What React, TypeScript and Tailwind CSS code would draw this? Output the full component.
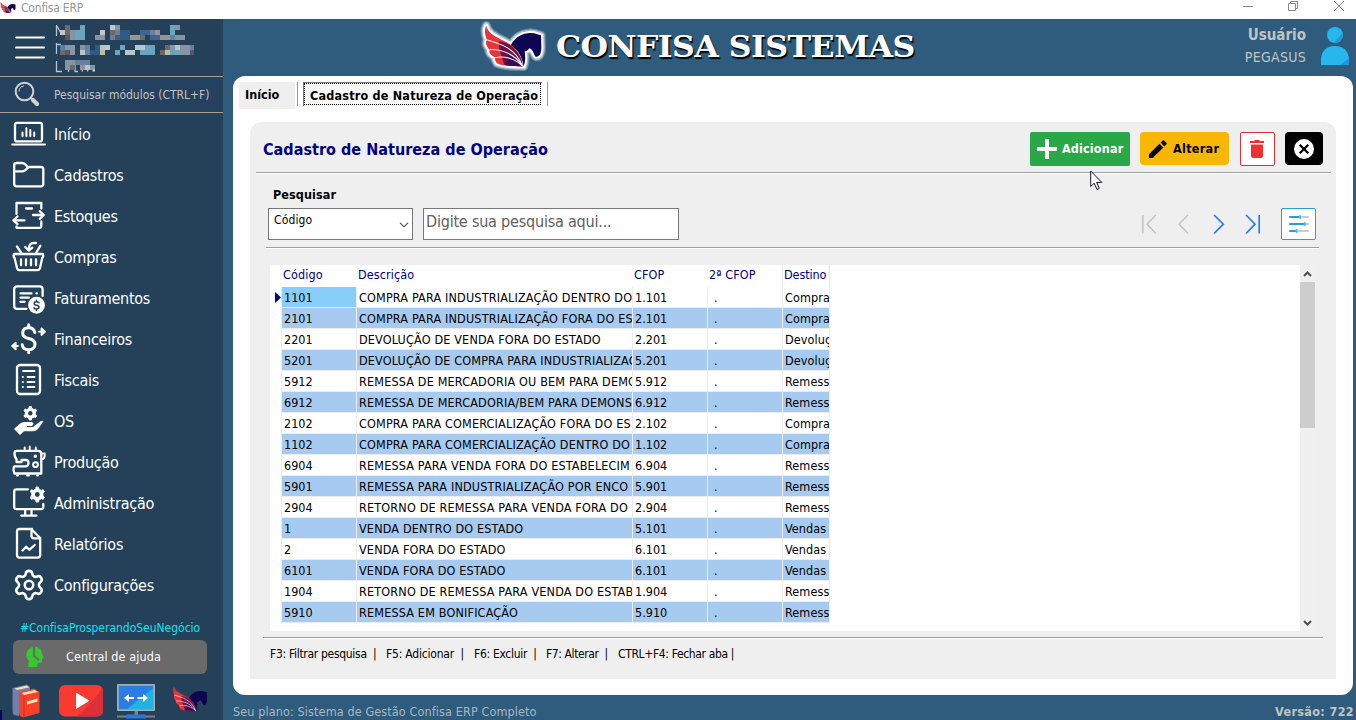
import type { ReactNode } from "react";
import { Settings } from "lucide-react";

const navy = "#0d0552";
const side = "#244159";

function gearPath(cx: number, cy: number, r: number, teeth: number) {
  const pts: string[] = [];
  for (let i = 0; i < teeth; i++) {
    const a = (i / teeth) * Math.PI * 2 - Math.PI / 2;
    const s = Math.PI / teeth;
    for (const [o, k] of [[-0.95, 0.74], [-0.45, 0.78], [-0.32, 1], [0.32, 1], [0.45, 0.78]]) {
      pts.push(`${(cx + Math.cos(a + o * s) * r * k).toFixed(2)},${(cy + Math.sin(a + o * s) * r * k).toFixed(2)}`);
    }
  }
  return `M${pts.join("L")}Z`;
}

function Horse({ className, glow, box }: { className: string; glow?: boolean; box: string }) {
  const horse =
    "M122 108C132 90 148 72 174 70C192 66 205 74 214 76L215 112C215 134 208 141 199 140C191 136 192 118 179 115C173 124 167 125 165 122C167 140 168 155 162 169C158 145 148 118 122 108Z";
  const wing =
    "M50 47C58 84 112 88 132 112C150 132 160 152 158 169C132 168 104 170 82 160C78 152 72 148 78 143C64 136 56 128 60 120C50 108 46 98 52 90C46 76 43 60 50 47Z";
  return (
    <svg className={className} viewBox={box}>
      {glow && (
        <g stroke="#fff" strokeLinejoin="round" fill="#fff">
          <path d={horse + wing} strokeWidth="28" opacity=".25" />
          <path d={horse + wing} strokeWidth="21" opacity=".45" />
          <path d={horse + wing} strokeWidth="13" opacity=".9" />
        </g>
      )}
      <path d={horse} fill={navy} />
      <path d={wing} fill="#e73538" />
      <path d="M88 94C112 98 124 106 134 116C150 132 160 152 158 169C136 168 118 168 104 164L96 140L88 114Z" fill="#6d1149" />
      <path d="M118 132C140 138 156 150 158 169C140 168 124 168 108 165Z" fill="#3a0a50" />
      <g fill="none" stroke="#f7eef2" strokeWidth="3.2">
        <path d="M51 89C90 100 140 115 158 168" />
        <path d="M59 119C95 116 140 135 158 168" />
        <path d="M77 143C105 136 140 148 158 168" />
      </g>
    </svg>
  );
}

function MenuIcon({ children }: { children: ReactNode }) {
  return (
    <svg
      className="h-[41px] w-9 shrink-0"
      viewBox="11 0 36 41"
      fill="none"
      stroke="#fff"
      strokeWidth="2.3"
      strokeLinecap="round"
      strokeLinejoin="round"
    >
      {children}
    </svg>
  );
}

const menu: { label: string; icon: ReactNode }[] = [
  {
    label: "Início",
    icon: (
      <MenuIcon>
        <rect x="15" y="9.8" width="27" height="18.6" rx="2" />
        <path d="M12.2 31.6H45M22.5 19.5V23.3M26.4 15V23.3M30.3 17V23.3M34.2 19.5V23.3" strokeWidth="2" />
      </MenuIcon>
    ),
  },
  {
    label: "Cadastros",
    icon: (
      <MenuIcon>
        <path d="M28 13H41Q43.3 13 43.3 15V30Q43.3 32.3 41 32.3H16.5Q14.2 32.3 14.2 30V11Q14.2 9 16.5 9H22Q24 9 25.2 10.3L28 13.6L25 16.4Q24 17.4 22 17.4H14.5" />
      </MenuIcon>
    ),
  },
  {
    label: "Estoques",
    icon: (
      <MenuIcon>
        <path d="M16.5 19V8H41.3V13.5M16.5 31.5V32.8H40Q41.3 32.8 41.3 31.5V26.5M26 13.5H32" />
        <path d="M33 20H43.5M39.7 16.2L43.8 20L39.7 23.8M24.5 25.3H14M17.5 21.5L13.4 25.3L17.5 29.1" />
      </MenuIcon>
    ),
  },
  {
    label: "Compras",
    icon: (
      <MenuIcon>
        <path d="M14 18H42.8Q43.8 20.5 42.2 22L40 32Q39.4 34.2 37.5 34.2H19.5Q17.5 34.2 17 32L14.6 22Q13 20.5 14 18Z" />
        <path d="M21 23.5V29.3M26 23.5V29.3M31 23.5V29.3M36 23.5V29.3M17 10.5L21.3 17M40.3 9.8L36 17M36 7H33.5Q29 7 28.7 13.5M25.3 11L28.7 14.5L32.3 11.6" />
      </MenuIcon>
    ),
  },
  {
    label: "Faturamentos",
    icon: (
      <MenuIcon>
        <path d="M26.5 31.8H17Q14.2 31.8 14.2 29V12Q14.2 9.3 17 9.3H39.8Q42.6 9.3 42.6 12V19M20.5 16.4H31.5M36.5 16.4H37M20.5 20.7H29M20.5 24.8H24.5" />
        <circle cx="36.5" cy="28.3" r="7.3" fill="#fff" />
        <path
          d="M39 25.8Q38 24.7 36.5 24.7Q34.2 24.7 34.2 26.4Q34.2 28 36.5 28.3Q39 28.7 39 30.3Q39 32 36.5 32Q34.8 32 33.9 30.8M36.5 23.3V24.5M36.5 32V33.4"
          stroke={side}
          strokeWidth="1.5"
        />
      </MenuIcon>
    ),
  },
  {
    label: "Financeiros",
    icon: (
      <MenuIcon>
        <path
          d="M34.8 14.5Q33.8 9.8 28.7 9.8Q22.7 9.8 22.7 15Q22.7 19.3 28.7 20.5Q35 21.8 35 26.3Q35 31.7 28.7 31.7Q23 31.7 22.2 26.7M28.7 6.8V9.5M28.7 32V34.8"
          strokeWidth="3"
        />
        <path d="M39 13.7H44M41.5 10.3L45 13.7L41.5 17.1ZM18 28H13.5M15.7 24.6L12.2 28L15.7 31.4Z" fill="#fff" strokeWidth="1.8" />
      </MenuIcon>
    ),
  },
  {
    label: "Fiscais",
    icon: (
      <MenuIcon>
        <rect x="17" y="6" width="23" height="29" rx="3" />
        <path d="M23 12H34.5M27.5 18H34.5M27.5 23H34.5M27.5 28H34.5M22.7 18H23M22.7 23H23M22.7 28H23" strokeWidth="1.8" />
      </MenuIcon>
    ),
  },
  {
    label: "OS",
    icon: (
      <MenuIcon>
        <path d={gearPath(30.3, 13.3, 6.8, 6)} fill="#fff" strokeWidth="1" />
        <circle cx="30.3" cy="13.3" r="2.2" fill={side} stroke="none" />
        <path
          d="M14 29L20 23.5Q22.5 21.5 26 22H31.5Q33.8 22.3 33.5 24L32 26H27V27H33L40 21.5Q42 20.3 43.5 21.3L38 29Q36.3 31.3 33 31.3H24L20 35Z"
          fill="#fff"
          stroke="none"
        />
      </MenuIcon>
    ),
  },
  {
    label: "Produção",
    icon: (
      <MenuIcon>
        <path d="M14.5 12Q14.5 9.8 17 9.8H38Q41.3 9.8 41.3 13V32.5H14.5Q12.5 28 14.5 25.3H26Q28.5 25 28.5 22Q28.5 19 26 19H21.5V21H16.5V18Q14.5 16.5 14.5 12Z" />
        <path
          d="M41.5 18H43Q45 17 44.7 12.5H42M24.7 9V6.5M29.7 9V5.5M35.8 9V6.5M17 34.5H18M27 34.5H29M37 34.5H38"
          strokeWidth="2"
        />
        <circle cx="35.5" cy="23.7" r="2.4" strokeWidth="2" />
        <circle cx="35.3" cy="15.3" r="1" fill="#fff" strokeWidth="1.5" />
      </MenuIcon>
    ),
  },
  {
    label: "Administração",
    icon: (
      <MenuIcon>
        <path d="M28 7.3H16.5Q14.2 7.3 14.2 9.5V25Q14.2 27.2 16.5 27.2H41Q43.3 27.2 43.3 25V22M25.2 27.5V33M31.5 27.5V33M21 33.6H36.5" />
        <path d={gearPath(37.3, 12.5, 7.6, 6)} fill="#fff" strokeWidth="1" />
        <circle cx="37.3" cy="12.5" r="2.4" fill={side} stroke="none" />
      </MenuIcon>
    ),
  },
  {
    label: "Relatórios",
    icon: (
      <MenuIcon>
        <path d="M32 6H19.5Q17 6 17 8.5V32Q17 34.6 19.5 34.6H37.5Q40.2 34.6 40.2 32V15L31.5 6.3V13Q31.5 15.3 34 15.3H40M22.5 27.5L26.2 23.7L29.3 26.8L34.7 22" />
      </MenuIcon>
    ),
  },
  {
    label: "Configurações",
    icon: (
      <span className="flex h-[41px] w-9 shrink-0 items-center justify-center">
        <Settings className="size-[34px] text-white" strokeWidth={1.8} />
      </span>
    ),
  },
];

const rows: [string, string, string, string][] = [
  ["1101", "COMPRA PARA INDUSTRIALIZAÇÃO DENTRO DO", "1.101", "Compra"],
  ["2101", "COMPRA PARA INDUSTRIALIZAÇÃO FORA DO ES", "2.101", "Compra"],
  ["2201", "DEVOLUÇÃO DE VENDA FORA DO ESTADO", "2.201", "Devoluç"],
  ["5201", "DEVOLUÇÃO DE COMPRA PARA INDUSTRIALIZAÇ", "5.201", "Devoluç"],
  ["5912", "REMESSA DE MERCADORIA OU BEM PARA DEMO", "5.912", "Remess"],
  ["6912", "REMESSA DE MERCADORIA/BEM PARA DEMONS", "6.912", "Remess"],
  ["2102", "COMPRA PARA COMERCIALIZAÇÃO FORA DO ES", "2.102", "Compra"],
  ["1102", "COMPRA PARA COMERCIALIZAÇÃO DENTRO DO", "1.102", "Compra"],
  ["6904", "REMESSA PARA VENDA FORA DO ESTABELECIM", "6.904", "Remess"],
  ["5901", "REMESSA PARA INDUSTRIALIZAÇÃO POR ENCO", "5.901", "Remess"],
  ["2904", "RETORNO DE REMESSA PARA VENDA FORA DO", "2.904", "Remess"],
  ["1", "VENDA DENTRO DO ESTADO", "5.101", "Vendas"],
  ["2", "VENDA FORA DO ESTADO", "6.101", "Vendas"],
  ["6101", "VENDA FORA DO ESTADO", "6.101", "Vendas"],
  ["1904", "RETORNO DE REMESSA PARA VENDA DO ESTAB", "1.904", "Remess"],
  ["5910", "REMESSA EM BONIFICAÇÃO", "5.910", "Remess"],
];

const tones: Record<string, string> = {
  a: "#8794a6", b: "#6ba4bd", c: "#5e5663", d: "#2e5a86", e: "#6c6a69", f: "#c3c6c9",
  g: "#b7c6c8", h: "#697fa0", i: "#9a938e", j: "#3f6498", k: "#b8bfa0", l: "#4f80b8",
};
const mosaicRows: [number, string][] = [
  [25, "  e  b     fa          ba"],
  [30, " feabb   f ehdd  jjhi  b "],
  [35, "  cabb  aa hcddiie jjiihaa"],
  [45, " laa ah dgf  b  ggbb  eagaah"],
  [50, " eca ghddk  b gg bbb ekbbaac"],
  [60, "  aahhh"],
  [65, "  ae iga"],
];

function Mosaic() {
  return (
    <svg className="h-[57px] w-[140px]" viewBox="54 19 140 57">
      <g fill="none" stroke="#b5c3d3" strokeWidth="1.3">
        <path d="M56.5 25V36M57 26L62 35M56.5 43V54M56.5 44.5H61M56.5 61V71.5H62M66 62H72M68.5 62V72M75 62V71.5H78M82 71.5L85 64L88 71.5" />
      </g>
      {mosaicRows.map(([y, line]) =>
        [...line].map((c, i) =>
          tones[c] ? <rect key={`${y}-${i}`} x={55 + i * 5} y={y} width="5" height="5" fill={tones[c]} /> : null,
        ),
      )}
      <path d="M92.5 70.5H95" stroke="#d0d4d8" strokeWidth="2" />
    </svg>
  );
}

function Sidebar() {
  return (
    <aside className="relative flex h-[701px] w-[223px] shrink-0 flex-col bg-[#244159]">
      <div className="flex h-[57px] items-start">
        <svg className="ml-[14px] h-[57px] w-8" viewBox="14 19 32 57" stroke="#fff" strokeWidth="2.2" strokeLinecap="round">
          <path d="M16 37.5H44M16 47.5H44M16 57.5H44" />
        </svg>
        <div className="ml-2">
          <Mosaic />
        </div>
      </div>
      <div className="flex h-[37px] items-center border-y border-[#a5a09c] bg-[#24415f]">
        <svg className="ml-[14px] h-7 w-7" viewBox="0 0 28 28" fill="none" stroke="#d0d1d3">
          <circle cx="10.5" cy="10.5" r="8.8" strokeWidth="2" />
          <path d="M5 10.5Q5.2 5.4 10 5" strokeWidth="1" />
          <path d="M17 17L19 19" strokeWidth="2" />
          <path d="M19 19L23 23" strokeWidth="4.2" strokeLinecap="round" />
        </svg>
        <span className="ml-3 text-[12px] tracking-[-0.02px] whitespace-nowrap text-[#c3c3c3]">Pesquisar módulos (CTRL+F)</span>
      </div>
      <nav className="flex flex-col">
        {menu.map((m) => (
          <div key={m.label} className="flex h-[41px] items-center pl-[11px]">
            {m.icon}
            <span className="ml-[7px] pt-[2px] text-[16px] tracking-[-0.25px] whitespace-nowrap text-white">{m.label}</span>
          </div>
        ))}
      </nav>
      <div className="mt-[14px] flex h-[17px] items-center pl-5 text-[12px] leading-none tracking-[-0.02px] whitespace-nowrap text-[#0de4ee]">
        #ConfisaProsperandoSeuNegócio
      </div>
      <div className="mt-1 ml-[13px] flex h-[34px] w-[194px] items-center rounded-[6px] bg-[#6a6a6a]">
        <svg className="ml-3 h-[22px] w-5" viewBox="0 0 20 22">
          <path d="M3 21L4 15Q-1 10 3 4Q7 0 12 1Q17 3 17 8L19 11L17 13V16Q16 17 13 17L12 21Z" fill="#35c92f" />
          <path d="M9 0V10L14 14" fill="none" stroke="#6a6a6a" strokeWidth="2.2" />
        </svg>
        <span className="ml-[21px] pt-px text-[12.5px] tracking-[0.1px] whitespace-nowrap text-white">Central de ajuda</span>
      </div>
      <div className="mt-[9px] flex items-start pl-[11px]">
        <svg className="h-[37px] w-[31px]" viewBox="11 683 31 37">
          <path d="M12.5 688L27 684.5L30 687V692L19 694V716L14 715Q12.3 713 12.5 710Z" fill="#7080ac" />
          <path d="M14.5 688.5L27 685.5L29 687.5L17 690Z" fill="#f6dfa8" />
          <path d="M19 692.5L34 688.5L39.5 692V713L23 717.5Q19 716 19 713Z" fill="#f5402c" />
          <path d="M21.5 693L34.5 690L38 692L24 695Z" fill="#fde3ac" />
          <path d="M24 696V717" stroke="#c92f25" />
          <path d="M27 701.5L37.5 698.5V701.5L27 704.5Z" fill="#fdeab8" />
        </svg>
        <svg className="mt-px ml-[17px] h-[33px] w-11" viewBox="0 0 44 33">
          <rect y="1" width="44" height="31.5" rx="6" fill="#f93a30" />
          <path d="M44 7V26Q44 32.5 38 32.5H18L36 14L44 4Z" fill="#dc3038" />
          <path d="M17 8.5V25L30.5 16.7Z" fill="#fff" />
        </svg>
        <svg className="ml-[14px] h-9 w-[38px]" viewBox="0 0 38 36">
          <path d="M17.5 28H21V33H17.5ZM0 32.5H38V34.5H0Z" fill="#7a8088" />
          <rect x="9" y="31.5" width="20" height="4" rx="1" fill="#2a78df" />
          <rect y="1" width="38" height="27" rx="1" fill="#a3adb4" />
          <path d="M1.8 2.8H36.2V26.2H1.8Z" fill="#2b7de6" />
          <path d="M36.2 5V26.2H10Z" fill="#1fb2e2" />
          <path d="M7 15L12 11V14H17V16H12V19ZM31 15L26 11V14H20.5V16H26V19Z" fill="#fff" />
        </svg>
        <Horse className="mt-[3px] ml-[17px] h-[26px] w-9" box="40 44 180 130" />
      </div>
      <span className="absolute bottom-0 left-0 h-[10px] w-[2px] bg-[#0b0560]" />
    </aside>
  );
}

function Rule({ className }: { className: string }) {
  return <div className={`h-[2px] shrink-0 border-t border-[#9f9f9f] bg-white ${className}`} />;
}

function Grid() {
  return (
    <div className="ml-5 flex h-[366px] w-[1045px] bg-white">
      <div className="flex w-[1030px] flex-col">
        <div className="flex h-[22px] pl-[13px] text-[12.5px] leading-[20px] tracking-[0.1px] text-[#000080]">
          <span className="w-[75px]">Código</span>
          <span className="w-[276px]">Descrição</span>
          <span className="w-[75px]">CFOP</span>
          <span className="w-[73px]">2ª CFOP</span>
          <span className="w-[48px] border-x border-[#e6e6e6] pl-px tracking-[-0.1px]">Destino</span>
        </div>
        {rows.map(([code, desc, cfop, dest], i) => (
          <div key={i} className="flex h-[21px] text-[12.5px] leading-[22px] whitespace-nowrap text-black">
            <span className="flex w-[11px] items-center justify-center">
              {i === 0 && (
                <svg className="ml-[5px] h-[11px] w-[6px]" viewBox="0 0 6 11">
                  <path d="M0 0L6 5.5L0 11Z" fill="#000080" />
                </svg>
              )}
            </span>
            <div className={`flex border-l border-[#ececec] ${i % 2 ? "bg-[#a6caf0]" : "bg-white"}`}>
              <span className={`w-[75px] overflow-hidden border-r border-b border-[#ececec] pl-[2px] ${i === 0 ? "bg-[#87cefa]" : ""}`}>{code}</span>
              <span className="w-[276px] overflow-hidden border-r border-b border-[#ececec] pl-[2px] tracking-[0.17px]">{desc}</span>
              <span className="w-[75px] overflow-hidden border-r border-b border-[#ececec] pl-[2px]">{cfop}</span>
              <span className="w-[75px] overflow-hidden border-r border-b border-[#ececec] pl-[6px]">.</span>
              <span className="w-[47px] overflow-hidden border-r border-b border-[#ececec] pl-[2px] tracking-[0.1px]">{dest}</span>
            </div>
          </div>
        ))}
      </div>
      <div className="flex w-[15px] flex-col items-center bg-[#f0f0f0]">
        <svg className="h-[17px] w-[15px]" viewBox="0 0 15 17" fill="none" stroke="#514b58" strokeWidth="2">
          <path d="M4 11L7.5 7.5L11 11" />
        </svg>
        <div className="h-[146px] w-full bg-[#cdcdcd]" />
        <svg className="mt-auto h-[17px] w-[15px]" viewBox="0 0 15 17" fill="none" stroke="#514b58" strokeWidth="2">
          <path d="M4 7L7.5 10.5L11 7" />
        </svg>
      </div>
    </div>
  );
}

function Workspace() {
  return (
    <main className="ml-[10px] flex h-[619px] w-[1120px] flex-col rounded-[12px] bg-white">
      <div className="flex h-[46px] items-start pt-[6px] pl-[6px] font-bold text-black">
        <div className="h-[27px] w-14 bg-[#efefef] pl-[6px] text-[12.5px] leading-[26px]">Início</div>
        <div className="ml-[2px] h-6 w-px bg-[#999]" />
        <div className="ml-[5px] h-[24px] w-[239px] border-t border-l border-[#777] bg-[#f8f8f8]">
          <div className="h-[22px] w-[237px] border border-dotted border-black pl-[5px] text-[12.5px] leading-[23px] tracking-[0.2px] whitespace-nowrap">
            Cadastro de Natureza de Operação
          </div>
        </div>
        <div className="ml-[5px] h-6 w-px bg-[#999]" />
      </div>
      <section className="relative ml-[17px] flex h-[557px] w-[1086px] flex-col rounded-t-[12px] bg-[#efefef]">
        <div className="flex h-[50px] items-start pt-[10px] pl-[13px]">
          <h1 className="w-[767px] pt-px text-[16px] leading-[34px] font-bold tracking-[0.03px] whitespace-nowrap text-[#000080]">
            Cadastro de Natureza de Operação
          </h1>
          <button className="flex h-[34px] w-[100px] items-center rounded-[2px] bg-[#2aa746] pl-[7px] text-[12.5px] font-bold text-white">
            <svg className="h-5 w-5" viewBox="0 0 20 20" stroke="#fff" strokeWidth="4">
              <path d="M10 0V20M0 10H20" />
            </svg>
            <span className="ml-[5px] pt-px tracking-[0.15px]">Adicionar</span>
          </button>
          <button className="ml-[10px] flex h-[33px] w-[89px] items-center rounded-[4px] bg-[#f8b605] pl-[9px] text-[12.5px] font-bold text-black">
            <svg className="h-[18px] w-[18px]" viewBox="0 0 18 18">
              <path d="M0 14.2L10.5 3.7L14.3 7.5L3.8 18H0ZM11.6 2.6L13.8 .5Q14.4 0 15 .5L17.5 3Q18 3.6 17.5 4.2L15.4 6.4Z" />
            </svg>
            <span className="ml-[6px] pt-[2px] tracking-[0.3px]">Alterar</span>
          </button>
          <button className="ml-[11px] flex h-[34px] w-[35px] items-center rounded-[2px] border border-[#e03038] bg-white pl-[9px]">
            <svg className="h-[18px] w-[14px]" viewBox="0 0 14 18" fill="#ee3030">
              <path d="M1 4.5H13V16Q13 18 11 18H3Q1 18 1 16ZM0 1H4L5 0H9L10 1H14V3H0Z" />
            </svg>
          </button>
          <button className="ml-[10px] flex h-[33px] w-[38px] items-center justify-center rounded-[4px] bg-black">
            <svg className="h-5 w-5" viewBox="0 0 20 20">
              <circle cx="10" cy="10" r="10" fill="#fff" />
              <path d="M5.7 5.7L14.3 14.3M14.3 5.7L5.7 14.3" stroke="#000" strokeWidth="2.3" />
            </svg>
          </button>
        </div>
        <Rule className="ml-[6px] w-[1075px]" />
        <div className="mt-[13px] h-[16px] pl-[23px] text-[12.5px] leading-[16px] font-bold tracking-[0.1px] text-black">Pesquisar</div>
        <div className="mt-[5px] flex h-8 items-start pl-[18px]">
          <div className="flex h-8 w-[145px] items-start border border-[#777] bg-white pl-[5px]">
            <span className="text-[12px] leading-[22px] tracking-[0.15px]">Código</span>
            <svg className="mt-[10px] mr-[3px] ml-auto h-3 w-[10px]" viewBox="0 0 10 12" fill="none" stroke="#444" strokeWidth="1.1">
              <path d="M1 3.8L5 7.8L9 3.8" />
            </svg>
          </div>
          <div className="ml-[10px] h-8 w-64 border border-[#777] bg-white pl-[2px] text-[16px] leading-[26px] tracking-[-0.2px] whitespace-nowrap text-[#606060]">
            Digite sua pesquisa aqui...
          </div>
          <svg className="ml-[461px] h-8 w-[124px]" viewBox="1140 208 124 32" fill="none" strokeWidth="1.7">
            <path d="M1142.8 215V233.5M1155.8 215L1147 224.2L1155.8 233.5M1188 215L1179 224.2L1188 233.5" stroke="#c4c7ca" />
            <path d="M1214 215L1223.3 224.2L1214 233.5M1246 215L1255 224.2L1246 233.5M1259.2 215V233.5" stroke="#2a7de4" />
          </svg>
          <div className="ml-[17px] flex h-8 w-[35px] items-center justify-center rounded-[2px] border border-[#2a9bdc] bg-white">
            <svg className="h-[18px] w-5" viewBox="0 0 20 18" strokeWidth="2" strokeLinecap="round">
              <path d="M12 2H19M16 9H19M8 16H19" stroke="#c9ced4" />
              <path d="M1 2H11M1 9H16M1 16H7" stroke="#2f97e0" />
              <path d="M11 1V3M15.8 8V10M7.5 15V17" stroke="#43c2f2" strokeWidth="2" />
            </svg>
          </div>
        </div>
        <Rule className="mt-[7px] ml-4 w-[1053px]" />
        <div className="mt-4">
          <Grid />
        </div>
        <Rule className="mt-[6px] ml-[13px] w-[1060px]" />
        <div className="mt-[6px] flex pl-5 text-[12px] leading-[18px] whitespace-nowrap text-black">
          <span className="w-[116px] tracking-[-0.3px]">F3: Filtrar pesquisa&nbsp; |</span>
          <span className="w-[88px] tracking-[-0.2px]">F5: Adicionar&nbsp; |</span>
          <span className="w-[72px] tracking-[-0.3px]">F6: Excluir&nbsp; |</span>
          <span className="w-[72px] tracking-[-0.4px]">F7: Alterar&nbsp; |</span>
          <span className="tracking-[-0.35px]">CTRL+F4: Fechar aba |</span>
        </div>
        <svg className="absolute top-[48px] left-[840px] h-[21px] w-[13px]" viewBox="0 0 13 21">
          <path d="M.7 1V16.5L4.2 13.2L7 19.5L9.3 18.4L6.6 12.4H11.8Z" fill="#fff" stroke="#1a1a28" />
        </svg>
      </section>
    </main>
  );
}

export default function App() {
  return (
    <div className="flex h-[720px] w-[1356px] flex-col overflow-hidden bg-[#2f5b7d] font-['DejaVu_Sans_Condensed','DejaVu_Sans',sans-serif] [font-stretch:condensed]">
      <header className="flex h-[19px] items-start bg-white">
        <Horse className="mt-px h-[13px] w-4" box="40 44 180 130" />
        <span className="ml-[5px] text-[12px] leading-[16px] tracking-[-0.2px] text-[#8d9a96]">Confisa ERP</span>
        <svg className="ml-auto h-[14px] w-[116px]" viewBox="1240 0 116 14" fill="none" stroke="#8a8a8a">
          <path d="M1243 6.5H1253M1288.5 3.5H1295.5V10.5H1288.5ZM1290.5 3.5V1.5H1297.5V8.5H1295.5M1334 1L1344 11M1344 1L1334 11" />
        </svg>
      </header>
      <div className="flex h-[701px]">
        <Sidebar />
        <div className="flex w-[1133px] flex-col">
          <div className="flex h-[57px] items-start">
            <Horse glow className="ml-[255px] h-[57px] w-[72px] shrink-0" box="25 27 216 171" />
            <div className="ml-[6px] w-[380px] origin-left scale-x-[1.09] pt-[10px] font-['DejaVu_Serif',serif] text-[29px] leading-[36px] font-bold tracking-[-0.5px] whitespace-nowrap text-white [font-stretch:normal] [text-shadow:1px_2px_1px_#000]">
              CONFISA SISTEMAS
            </div>
            <div className="ml-auto flex flex-col items-end pt-[5px] text-[#c0c4c4]">
              <span className="text-[15px] leading-[22px] font-bold">Usuário</span>
              <span className="text-[14px] leading-[23px] tracking-[0.3px]">PEGASUS</span>
            </div>
            <svg className="mt-2 mr-[7px] ml-[15px] h-[38px] w-7 shrink-0" viewBox="0 0 28 38">
              <circle cx="14" cy="8" r="8" fill="#25b7ee" />
              <path d="M21.5 6Q22 10.5 19 13.5Q16.5 16 13 15.8Z" fill="#2097df" />
              <path d="M0 38V31Q2 19 14 19Q26 19 28 31V38Z" fill="#25b7ee" />
              <path d="M28 31V38H19Z" fill="#2097df" />
            </svg>
          </div>
          <Workspace />
          <footer className="flex h-[25px] items-center pt-[7px] pr-[2px] pl-[10px] text-[12.5px] leading-[15px] whitespace-nowrap text-[#a9b8bf]">
            <span className="tracking-[0.12px]">Seu plano: Sistema de Gestão Confisa ERP Completo</span>
            <span className="ml-auto font-bold tracking-[0.35px] text-[#c0c4c4]">Versão: 722</span>
          </footer>
        </div>
      </div>
    </div>
  );
}
